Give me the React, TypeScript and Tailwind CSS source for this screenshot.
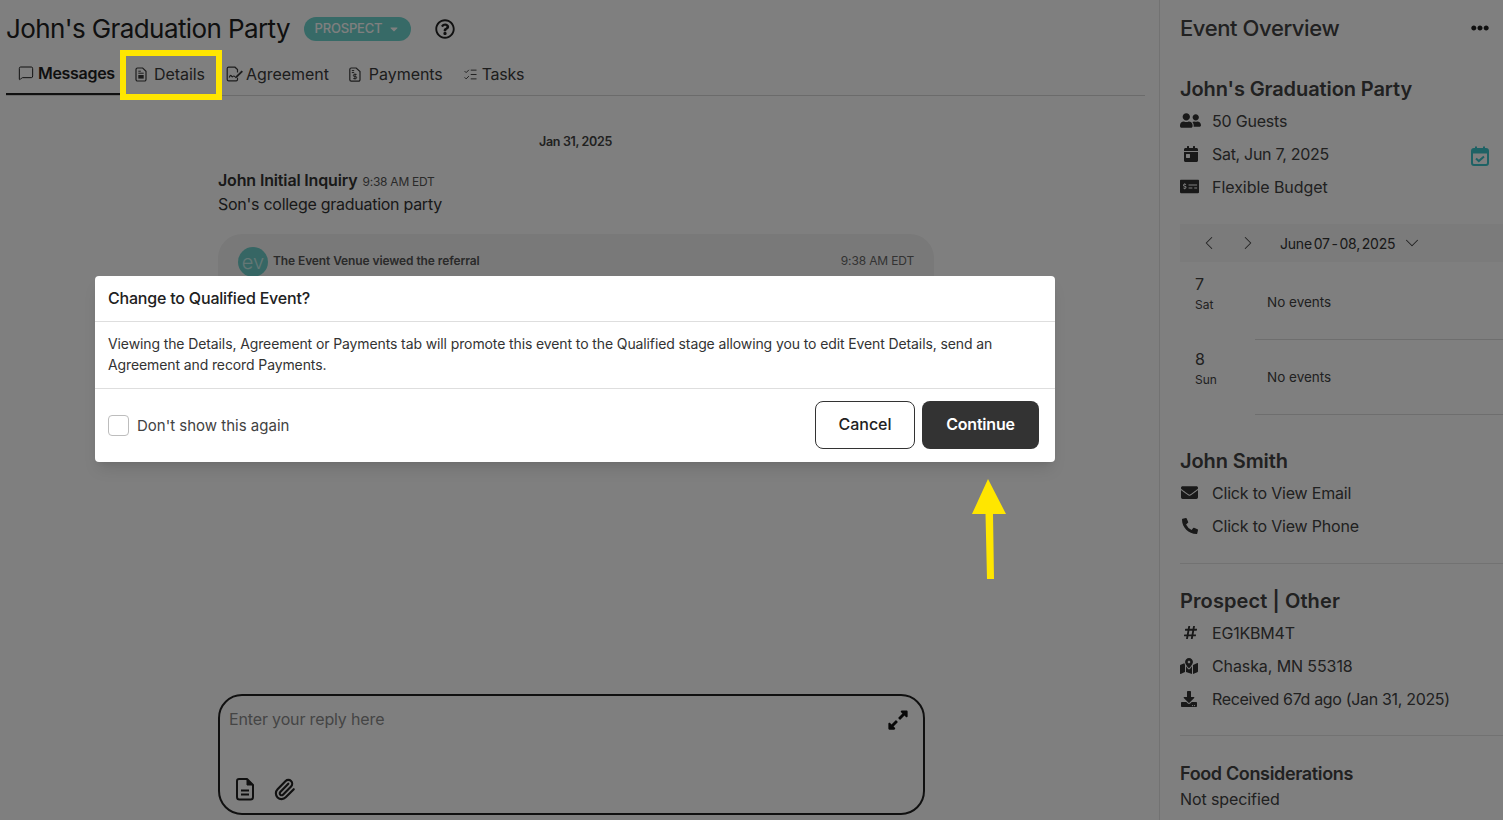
import React from "react";
import { FaUserFriends, FaCalendarDay, FaMoneyCheckAlt, FaEnvelope, FaPhoneAlt, FaHashtag, FaMapMarkedAlt, FaDownload, FaEllipsisH, FaExpandAlt, FaCaretDown, FaRegQuestionCircle } from "react-icons/fa";
import { MessageSquare, ListChecks, ChevronLeft, ChevronRight, ChevronDown, Paperclip } from "lucide-react";

function DetailsIcon() {
  return (
    <svg width="13" height="15" viewBox="0 0 13 15" fill="none" stroke="currentColor" strokeWidth="1.2">
      <path d="M2.5 1h5.2L11 4.2V12.5a1.5 1.5 0 0 1-1.5 1.5h-7A1.5 1.5 0 0 1 1 12.5v-10A1.5 1.5 0 0 1 2.5 1Z" />
      <path d="M3.3 4.2h2.5M3.3 6.2h5.4" strokeWidth="1" />
      <rect x="3.3" y="8" width="5.4" height="3.6" fill="currentColor" stroke="none" />
    </svg>
  );
}

function AgreementIcon() {
  return (
    <svg width="18" height="16" viewBox="0 0 18 16" fill="none" stroke="currentColor" strokeWidth="1.2">
      <path d="M11.5 6.5V3.6L9 1.2H2.6A1.4 1.4 0 0 0 1.2 2.6v10.8a1.4 1.4 0 0 0 1.4 1.4h7.6a1.4 1.4 0 0 0 1.3-1.4v-1.6" />
      <path d="M3.2 11.5c1-2 1.6-2.6 2.2-1.6s.8 1.2 1.6.5 1.2-.4 2 .6" />
      <path d="M9.5 10.5 15.6 4.4l1.4 1.4-6.2 6-1.9.5.6-1.8Z" fill="currentColor" stroke="none" />
    </svg>
  );
}

function PaymentsIcon() {
  return (
    <svg width="12" height="15" viewBox="0 0 12 15" fill="none" stroke="currentColor" strokeWidth="1.2">
      <path d="M2.2 1h5L11 4.6v8.2a1.4 1.4 0 0 1-1.4 1.4H2.2A1.4 1.4 0 0 1 .8 12.8V2.4A1.4 1.4 0 0 1 2.2 1Z" />
      <path d="M2.8 3.6h2.4M2.8 5.6h2.4" strokeWidth="1" />
      <path d="M7.6 7.4H5.4a1 1 0 0 0 0 2.1h1.2a1 1 0 0 1 0 2.1H4.3M6 6.6v5.8" strokeWidth="1" />
    </svg>
  );
}

function DocIcon() {
  return (
    <svg width="20" height="24" viewBox="0 0 20 24" fill="none" stroke="currentColor" strokeWidth="2">
      <path d="M4 2h8l6 6v12a2.5 2.5 0 0 1-2.5 2.5h-11A2.5 2.5 0 0 1 2 20V4a2 2 0 0 1 2-2Z" strokeLinejoin="round" />
      <path d="M12 2v6h6Z" fill="currentColor" stroke="currentColor" strokeWidth="1" />
      <path d="M6 13.5h8M6 17.5h8" />
    </svg>
  );
}

function CalendarTeal() {
  return (
    <svg width="18" height="20" viewBox="0 0 18 20" fill="none" className="ml-auto mr-[14px] mt-[4px] text-[#3cc4ca]">
      <rect x="1" y="3" width="16" height="16" rx="2" stroke="currentColor" strokeWidth="2" />
      <path d="M1 4h16v3.5H1Z" fill="currentColor" />
      <path d="M5 0.5v4M13 0.5v4" stroke="currentColor" strokeWidth="2" />
      <path d="m5 12.5 2.8 2.6L13 10.5" stroke="currentColor" strokeWidth="2" />
    </svg>
  );
}

function Tab({ icon, label, active, className }: { icon: React.ReactNode; label: string; active?: boolean; className?: string }) {
  return (
    <div className={`flex h-[40px] items-center pb-[2px] text-[16px] ${active ? "font-semibold border-b-2 border-[#212121] text-[#212121] tracking-[-0.3px]" : "text-[#3a3a3a] tracking-[-0.05px]"} ${className ?? ""}`}>
      {icon}
      <span>{label}</span>
    </div>
  );
}

function Row({ icon, children, right, track }: { icon: React.ReactNode; children: React.ReactNode; right?: React.ReactNode; track?: string }) {
  return (
    <div className="flex h-[33px] items-center text-[16px] text-[#424242]">
      <div className="flex w-[32px] shrink-0 items-center text-[#333]">{icon}</div>
      <span className={track ?? "tracking-[-0.2px]"}>{children}</span>
      {right}
    </div>
  );
}

function Day({ n, d, first }: { n: string; d: string; first?: boolean }) {
  return (
    <div className={`flex h-[75px] ${first ? "mt-[3px]" : ""}`}>
      <div className="w-[75px] shrink-0 pl-[15px] pt-[8px] text-[#424242]">
        <div className="text-[16px] leading-[23px]">{n}</div>
        <div className="text-[12px] leading-[18px]">{d}</div>
      </div>
      <div className="flex-1 border-b border-[#dcdcdc] pl-[12px] pt-[28px] text-[13.5px] leading-[18px] text-[#424242]">No events</div>
    </div>
  );
}

export default function App() {
  return (
    <div className="relative flex h-screen w-full overflow-hidden bg-white font-[Inter,sans-serif]">
      {/* Main column */}
      <main className="flex w-[1159px] shrink-0 flex-col pl-[6px] pr-[14px]">
        <header className="flex h-[55px] shrink-0 items-center pt-[2px]">
          <h1 className="text-[26px] font-normal leading-[32px] tracking-[-0.6px] text-[#212121]">John's Graduation Party</h1>
          <div className="ml-[14px] flex h-[24px] w-[107px] items-center justify-center gap-[6px] rounded-full bg-[#6fd4ce] text-[13px] font-medium tracking-[-0.2px] text-white">
            PROSPECT <FaCaretDown size={12} />
          </div>
          <FaRegQuestionCircle size={20} className="ml-[24px] text-[#212121]" />
        </header>

        <nav className="flex h-[41px] shrink-0 border-b border-[#d6d6d6]">
          <Tab active className="w-[114px] gap-[4px] pl-[12px]" icon={<MessageSquare size={16} strokeWidth={1.5} />} label="Messages" />
          <Tab className="ml-[15px] w-[70px]" icon={<span className="flex w-[19px]"><DetailsIcon /></span>} label="Details" />
          <Tab className="ml-[21px]" icon={<span className="flex w-[20px]"><AgreementIcon /></span>} label="Agreement" />
          <Tab className="ml-[20px]" icon={<span className="flex w-[20px]"><PaymentsIcon /></span>} label="Payments" />
          <Tab className="ml-[20px] [&>span:last-child]:tracking-[-0.3px]" icon={<span className="flex w-[19px]"><ListChecks size={15} strokeWidth={1.5} /></span>} label="Tasks" />
        </nav>

        <section className="min-h-0 flex-1 overflow-hidden">
          <div className="pt-[37px] text-center text-[12.5px] font-semibold leading-[18px] tracking-[-0.35px] text-[#424242]">Jan 31, 2025</div>
          <div className="ml-[212px] mt-[17px] w-[716px]">
            <div className="flex h-[24px] items-baseline gap-[5px] leading-[24px]">
              <span className="text-[16px] font-semibold tracking-[-0.15px] text-[#333]">John Initial Inquiry</span>
              <span className="text-[12px] tracking-[-0.25px] text-[#555]">9:38 AM EDT</span>
            </div>
            <p className="text-[16px] leading-[24px] tracking-[-0.27px] text-[#333]">Son's college graduation party</p>
            <div className="mt-[18px] flex h-[90px] items-start rounded-[24px] bg-[#f3f3f3] pl-[20px] pr-[20px] pt-[13px]">
              <div className="flex h-[30px] w-[30px] shrink-0 items-center justify-center rounded-full bg-[#6dcdc8] text-[20px] font-light leading-none text-[#c9eeeb]">ev</div>
              <span className="ml-[5px] mt-[6px] text-[12px] font-semibold leading-[16px] tracking-[-0.1px] text-[#555]">The Event Venue viewed the referral</span>
              <span className="ml-auto mt-[6px] text-[12px] leading-[16px] tracking-[-0.15px] text-[#666]">9:38 AM EDT</span>
            </div>
          </div>
        </section>

        <div className="mb-[5px] ml-[212px] flex h-[121px] w-[707px] shrink-0 flex-col rounded-[24px] border-2 border-[#212121] px-[9px] pt-[11px]">
          <div className="flex items-start justify-between pr-[5px]">
            <span className="text-[16px] leading-[24px] tracking-[-0.15px] text-[#8a8a8a]">Enter your reply here</span>
            <FaExpandAlt size={22} className="mt-[2px] text-[#111]" />
          </div>
          <div className="mt-auto mb-[12px] flex items-center gap-[18px] pl-[6px] text-[#212121]">
            <DocIcon />
            <Paperclip size={23} strokeWidth={2.25} />
          </div>
        </div>
      </main>

      {/* Side panel */}
      <aside className="min-w-0 flex-1 border-l border-[#e4e4e4] pl-[20px]">
        <div className="flex h-[56px] items-center justify-between pr-[14px]">
          <h2 className="text-[22px] font-medium leading-[28px] tracking-[-0.4px] text-[#424242]">Event Overview</h2>
          <FaEllipsisH size={18} className="text-[#212121]" />
        </div>
        <h3 className="mt-[19px] text-[20px] font-semibold leading-[28px] tracking-[-0.1px] text-[#424242]">John's Graduation Party</h3>
        <div className="mt-[1px]">
          <Row icon={<FaUserFriends size={21} />}>50 Guests</Row>
          <Row icon={<FaCalendarDay size={16} className="ml-[3px]" />} right={<CalendarTeal />} track="tracking-[-0.3px]">Sat, Jun 7, 2025</Row>
          <Row icon={<FaMoneyCheckAlt size={19} />} track="tracking-[-0.05px]">Flexible Budget</Row>
        </div>
        <div className="mt-[21px] flex h-[38px] items-center bg-[#f6f6f6] pl-[18px] text-[#424242]">
          <ChevronLeft size={22} strokeWidth={1.1} />
          <ChevronRight size={22} strokeWidth={1.1} className="ml-[17px]" />
          <span className="ml-[21px] text-[14px] tracking-[-0.2px] [word-spacing:-2px] text-[#333]">June 07 - 08, 2025</span>
          <ChevronDown size={22} strokeWidth={1.1} className="ml-[6px]" />
        </div>
        <Day first n="7" d="Sat" />
        <Day n="8" d="Sun" />

        <h3 className="mt-[32px] text-[20px] font-semibold leading-[28px] tracking-[-0.1px] text-[#424242]">John Smith</h3>
        <div className="mt-[1px]">
          <Row icon={<FaEnvelope size={17} className="ml-[1px]" />}>Click to View Email</Row>
          <Row icon={<FaPhoneAlt size={16} className="ml-[2px]" />}>Click to View Phone</Row>
        </div>
        <hr className="mt-[21px] border-[#e4e4e4]" />
        <h3 className="mt-[23px] text-[20px] font-semibold leading-[28px] tracking-[0.1px] text-[#424242]">Prospect | Other</h3>
        <div className="mt-[1px]">
          <Row icon={<FaHashtag size={15} className="ml-[3px]" />}>EG1KBM4T</Row>
          <Row icon={<FaMapMarkedAlt size={18} />} track="tracking-[-0.1px]">Chaska, MN 55318</Row>
          <Row icon={<FaDownload size={16} className="ml-[1px]" />} track="tracking-[-0.33px]">Received 67d ago (Jan 31, 2025)</Row>
        </div>
        <hr className="mt-[20px] border-[#e4e4e4]" />
        <h3 className="mt-[25px] text-[18px] font-semibold leading-[26px] tracking-[-0.35px] text-[#424242]">Food Considerations</h3>
        <p className="mt-[-1px] text-[16px] leading-[26px] tracking-[-0.1px] text-[#424242]">Not specified</p>
      </aside>

      {/* Backdrop */}
      <div className="absolute inset-0 bg-black/50" />

      {/* Annotation: highlighted tab */}
      <div className="absolute left-[120px] top-[50px] h-[50px] w-[102px] border-[6px] border-[#ffe600]" />

      {/* Dialog */}
      <div className="absolute left-[95px] top-[276px] w-[960px] rounded-[4px] bg-white shadow-lg">
        <div className="flex h-[46px] items-center border-b border-[#dedede] px-[13px] pb-[2px] text-[16px] font-medium tracking-[-0.2px] text-[#212121]">Change to Qualified Event?</div>
        <div className="h-[67px] border-b border-[#dedede] px-[13px] pt-[11px] text-[14px] leading-[21px] tracking-[-0.11px] text-[#333]">
          Viewing the Details, Agreement or Payments tab will promote this event to the Qualified stage allowing you to edit Event Details, send an Agreement and record Payments.
        </div>
        <div className="flex h-[73px] items-center px-[13px] pr-[16px]">
          <div className="h-[21px] w-[21px] rounded-[4px] border border-[#bdbdbd] bg-white" />
          <span className="ml-[8px] mt-[1px] text-[15px] text-[#424242]">Don't show this again</span>
          <button className="ml-auto mb-[2px] h-[48px] w-[100px] rounded-[8px] border border-[#333] bg-white pb-[2px] text-[16px] font-medium tracking-[-0.05px] text-[#212121]">Cancel</button>
          <button className="ml-[7px] mb-[2px] h-[48px] w-[117px] rounded-[8px] bg-[#333] pb-[2px] text-[16px] font-semibold tracking-[-0.2px] text-white">Continue</button>
        </div>
      </div>

      {/* Annotation: arrow */}
      <svg className="absolute left-[960px] top-[470px]" width="60" height="120" viewBox="960 470 60 120">
        <polygon fill="#ffe600" points="988,479 1006,514 993,514 994,579 987,579 985.5,514 972,514" />
      </svg>
    </div>
  );
}
